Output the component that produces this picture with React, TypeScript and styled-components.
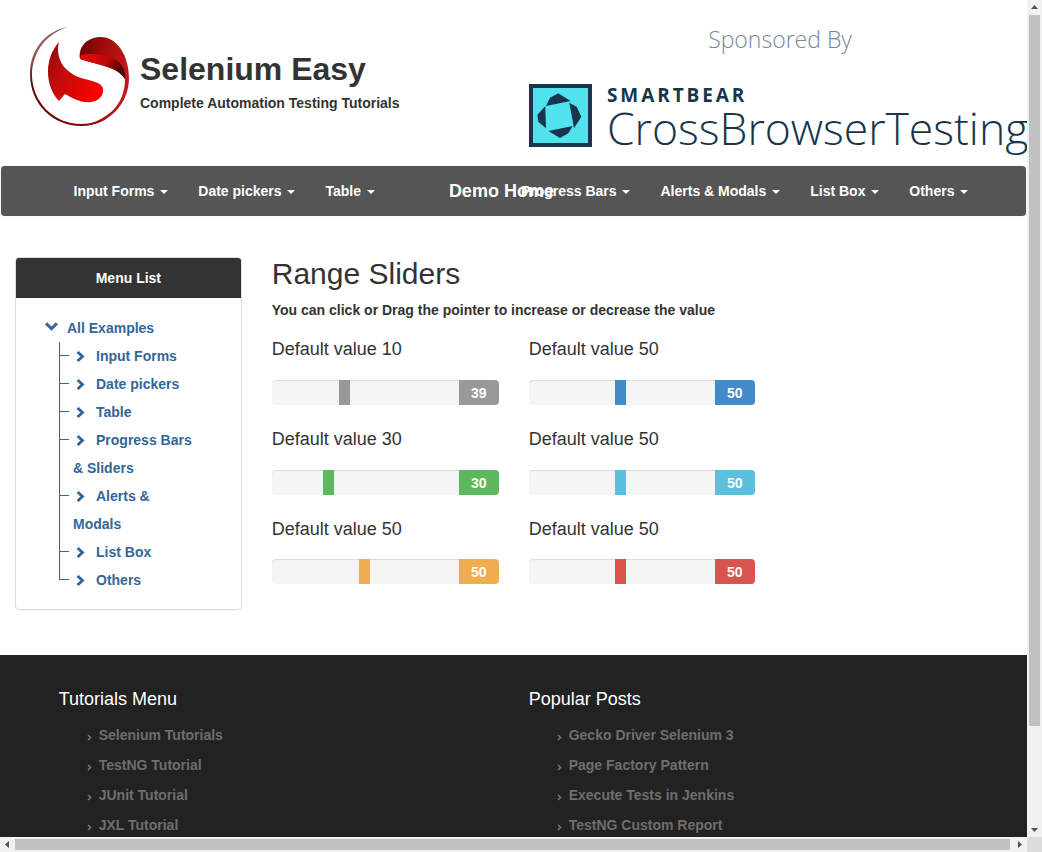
import { useState } from "react"
import styled, { createGlobalStyle } from "styled-components"

const GlobalStyle = createGlobalStyle`
  html, body {
    height: 100%;
    overflow: hidden;
  }
  body {
    margin: 0;
    background: #fff;
    color: #333;
    font-family: "Liberation Sans", Arial, sans-serif;
    font-size: 14px;
    line-height: 20px;
  }
`

const treeColor = "#336699"

const Logo = () => (
  <svg width="110" height="110" viewBox="0 0 110 110">
    <defs>
      <linearGradient id="ring" x1="0" y1="0" x2="1" y2="1">
        <stop offset="0" stopColor="#d8c0c0" />
        <stop offset="0.3" stopColor="#5a0606" />
        <stop offset="1" stopColor="#8a0a0a" />
      </linearGradient>
      <linearGradient id="upper" x1="0" y1="0" x2="1" y2="0.2">
        <stop offset="0" stopColor="#6d0404" />
        <stop offset="0.55" stopColor="#a80c0c" />
        <stop offset="1" stopColor="#c01818" />
      </linearGradient>
      <linearGradient id="fold" x1="0" y1="0" x2="1" y2="0.4">
        <stop offset="0" stopColor="#e80808" />
        <stop offset="0.6" stopColor="#c20808" />
        <stop offset="1" stopColor="#4a0202" />
      </linearGradient>
      <linearGradient id="lower" x1="0" y1="0" x2="1" y2="0.7">
        <stop offset="0" stopColor="#8c0808" />
        <stop offset="0.4" stopColor="#c00c0c" />
        <stop offset="1" stopColor="#fa0000" />
      </linearGradient>
    </defs>
    <path
      d="M43 5C20 9 5 28 5 52C5 82 28 104 56 104C66 104 76 101 84 95C75 99 66 102 56 102C29 102 7 80 7 53C7 30 22 11 43 5Z"
      fill="url(#ring)"
    />
    <path
      d="M55 37C53 25 62 15 76 15C92 15 104 34 104 56C104 82 84 103 56 104C80 99 100 85 100 57C92 44 72 43 55 37Z"
      fill="url(#upper)"
    />
    <path d="M55 37C72 43 92 44 100 57C101 51 98 44 93 39C82 32 66 31 56 33Z" fill="url(#fold)" />
    <path
      d="M34 20C27 28 23 38 23 50C23 61 27 72 34 79L40 72C50 78 58 81 66 80C74 79 79 73 78 67C77 61 70 60 64 58C52 56 42 50 37 42C33 35 32 27 34 20Z"
      fill="url(#lower)"
    />
  </svg>
)

const BearMark = () => (
  <BearSvg width="63" height="63" viewBox="0 0 63 63">
    <rect x="2" y="2" width="59" height="59" fill="#50e3ee" stroke="#17364d" strokeWidth="4" />
    <g fill="#17364d">
      <polygon points="17,22 21,13.7 29.3,9.3 41.7,17" />
      <polygon points="40.3,18.7 47.7,22.7 52.3,32.7 45,44.3" />
      <polygon points="43.7,42 39.3,49.3 31,54 19.3,47" />
      <polygon points="17,44.3 9.3,37.7 8.3,31 16.3,22" />
    </g>
  </BearSvg>
)

const Caret = styled.span`
  display: inline-block;
  width: 0;
  height: 0;
  margin-left: 2px;
  vertical-align: middle;
  border-top: 4px solid #fff;
  border-left: 4px solid transparent;
  border-right: 4px solid transparent;
`

const ChevronRight = () => (
  <TreeIcon width="9" height="11" viewBox="0 0 9 11">
    <polygon points="2.6,0 8.6,5.5 2.6,11 0.6,9 4.4,5.5 0.6,2" fill={treeColor} />
  </TreeIcon>
)

const ChevronDown = () => (
  <svg width="13" height="9" viewBox="0 0 13 9">
    <polygon points="0,2.4 2.2,0.2 6.5,4.4 10.8,0.2 13,2.4 6.5,8.8" fill={treeColor} />
  </svg>
)

const FooterBullet = () => (
  <BulletIcon width="5" height="7" viewBox="0 0 5 7">
    <polyline points="1,1 3.6,3.5 1,6" fill="none" stroke="#77776f" strokeWidth="1.5" />
  </BulletIcon>
)

const ScrollArrow = ({ points }: { points: string }) => (
  <ScrollButton>
    <svg width="15" height="15" viewBox="0 0 15 15">
      <polygon points={points} fill="#505050" />
    </svg>
  </ScrollButton>
)

type SliderColor = "grey" | "blue" | "green" | "cyan" | "orange" | "red"

const sliderColors: Record<SliderColor, string> = {
  grey: "#999999",
  blue: "#428bca",
  green: "#5cb85c",
  cyan: "#5bc0de",
  orange: "#f0ad4e",
  red: "#d9534f",
}

const sliders: { id: string; label: string; value: number; color: SliderColor }[] = [
  { id: "s1", label: "Default value 10", value: 39, color: "grey" },
  { id: "s2", label: "Default value 50", value: 50, color: "blue" },
  { id: "s3", label: "Default value 30", value: 30, color: "green" },
  { id: "s4", label: "Default value 50", value: 50, color: "cyan" },
  { id: "s5", label: "Default value 50", value: 50, color: "orange" },
  { id: "s6", label: "Default value 50", value: 50, color: "red" },
]

const RangeSlider = ({ label, start, color }: { label: string; start: number; color: SliderColor }) => {
  const [value, setValue] = useState(start)
  return (
    <SliderBlock>
      <SliderLabel>{label}</SliderLabel>
      <SliderRow>
        <RangeInput
          type="range"
          min={1}
          max={100}
          value={value}
          $color={sliderColors[color]}
          onChange={(e) => setValue(Number(e.target.value))}
        />
        <RangeOutput $color={sliderColors[color]}>{value}</RangeOutput>
      </SliderRow>
    </SliderBlock>
  )
}

const navLeft = ["Input Forms", "Date pickers", "Table"]
const navRight = ["Progress Bars", "Alerts & Modals", "List Box", "Others"]
const treeItems = ["Input Forms", "Date pickers", "Table", "Progress Bars & Sliders", "Alerts & Modals", "List Box", "Others"]

const footerColumns = [
  { title: "Tutorials Menu", links: ["Selenium Tutorials", "TestNG Tutorial", "JUnit Tutorial", "JXL Tutorial"] },
  { title: "Popular Posts", links: ["Gecko Driver Selenium 3", "Page Factory Pattern", "Execute Tests in Jenkins", "TestNG Custom Report"] },
]

const App = () => {
  return (
    <Frame>
      <GlobalStyle />
      <Viewport>
        <Header>
          <Brand>
            <LogoWrap>
              <Logo />
            </LogoWrap>
            <BrandText>
              <SiteTitle>Selenium Easy</SiteTitle>
              <SiteTagline>Complete Automation Testing Tutorials</SiteTagline>
            </BrandText>
          </Brand>
          <Sponsor>
            <SponsorTitle>Sponsored By</SponsorTitle>
            <SponsorLogo>
              <BearMark />
              <SponsorName>
                <BearWord>SMARTBEAR</BearWord>
                <ProductWord>CrossBrowserTesting</ProductWord>
              </SponsorName>
            </SponsorLogo>
          </Sponsor>
        </Header>

        <Navbar>
          <NavList>
            {navLeft.map((item) => (
              <NavItem key={item}>
                {item} <Caret />
              </NavItem>
            ))}
          </NavList>
          <DemoHome>Demo Home</DemoHome>
          <NavList>
            {navRight.map((item) => (
              <NavItem key={item}>
                {item} <Caret />
              </NavItem>
            ))}
          </NavList>
        </Navbar>

        <Content>
          <Sidebar>
            <Panel>
              <PanelHeading>Menu List</PanelHeading>
              <PanelBody>
                <TreeRoot>
                  <ChevronDown />
                  <TreeRootLabel>All Examples</TreeRootLabel>
                </TreeRoot>
                <TreeList>
                  {treeItems.map((item) => (
                    <TreeItem key={item}>
                      <ChevronRight />
                      {item}
                    </TreeItem>
                  ))}
                </TreeList>
              </PanelBody>
            </Panel>
          </Sidebar>
          <Main>
            <Title>Range Sliders</Title>
            <Intro>You can click or Drag the pointer to increase or decrease the value</Intro>
            <SliderGrid>
              {sliders.map((s) => (
                <RangeSlider key={s.id} label={s.label} start={s.value} color={s.color} />
              ))}
            </SliderGrid>
          </Main>
        </Content>

        <Footer>
          {footerColumns.map((col) => (
            <FooterColumn key={col.title}>
              <FooterTitle>{col.title}</FooterTitle>
              <FooterList>
                {col.links.map((link) => (
                  <FooterLink key={link}>
                    <FooterBullet />
                    {link}
                  </FooterLink>
                ))}
              </FooterList>
            </FooterColumn>
          ))}
        </Footer>
      </Viewport>

      <VerticalBar>
        <ScrollArrow points="7.5,5 11,9 4,9" />
        <VerticalTrack>
          <VerticalThumb />
        </VerticalTrack>
        <ScrollArrow points="4,6 11,6 7.5,10" />
      </VerticalBar>
      <HorizontalBar>
        <ScrollArrow points="5,7.5 9,4 9,11" />
        <HorizontalTrack>
          <HorizontalThumb />
        </HorizontalTrack>
        <ScrollArrow points="6,4 10,7.5 6,11" />
      </HorizontalBar>
      <ScrollCorner />
    </Frame>
  )
}

export default App

const Frame = styled.div`
  display: grid;
  grid-template-columns: 1fr 15px;
  grid-template-rows: 1fr 15px;
  height: 100vh;
`

const Viewport = styled.div`
  min-width: 0;
  min-height: 0;
  overflow: hidden;
`

const VerticalBar = styled.div`
  display: flex;
  flex-direction: column;
  background: #f1f1f1;
`

const HorizontalBar = styled.div`
  display: flex;
  background: #f1f1f1;
`

const ScrollButton = styled.div`
  flex: none;
  width: 15px;
  height: 15px;

  svg {
    display: block;
  }
`

const VerticalTrack = styled.div`
  flex: 1;
  padding: 0 2px;
`

const VerticalThumb = styled.div`
  height: 711px;
  background: #c1c1c1;
`

const HorizontalTrack = styled.div`
  flex: 1;
  padding: 2px 0;
`

const HorizontalThumb = styled.div`
  width: 995px;
  height: 11px;
  background: #c1c1c1;
`

const ScrollCorner = styled.div`
  background: #dcdcdc;
`

const Header = styled.header`
  display: flex;
  height: 166px;
`

const Brand = styled.div`
  display: flex;
  width: 529px;
  flex: none;
  padding-left: 25px;
  box-sizing: border-box;
`

const LogoWrap = styled.div`
  margin-top: 22px;
  height: 110px;
  margin-right: 5px;
`

const BrandText = styled.div`
  padding-top: 47px;
`

const SiteTitle = styled.h1`
  margin: 0;
  font-size: 32px;
  line-height: 44px;
  font-weight: bold;
  color: #333;
`

const SiteTagline = styled.div`
  margin-top: 2px;
  font-size: 14px;
  line-height: 20px;
  font-weight: bold;
`

const Sponsor = styled.div`
  width: 500px;
  flex: none;
`

const SponsorTitle = styled.div`
  padding-top: 23px;
  padding-left: 2px;
  text-align: center;
  font-family: "Open Sans", sans-serif;
  font-weight: 300;
  font-size: 23px;
  line-height: 33px;
  color: #76889a;
`

const SponsorLogo = styled.div`
  display: flex;
  gap: 15px;
  margin-top: 28px;
  color: #17364d;
`

const BearSvg = styled.svg`
  flex: none;
`

const SponsorName = styled.div`
  display: flex;
  flex-direction: column;
  white-space: nowrap;
`

const BearWord = styled.span`
  font-family: "Open Sans", sans-serif;
  font-weight: 700;
  font-size: 19px;
  line-height: 22px;
  letter-spacing: 2.9px;
`

const ProductWord = styled.span`
  font-family: "Open Sans", sans-serif;
  font-weight: 300;
  font-size: 44.5px;
  line-height: 44px;
`

const Navbar = styled.nav`
  display: flex;
  align-items: center;
  height: 50px;
  margin: 0 1px;
  padding-left: 57.5px;
  background: #555;
  border-radius: 4px;
  box-shadow: 0 0 1px #aaa;
  color: #fff;
`

const NavList = styled.ul`
  display: flex;
  list-style: none;
  margin: 0;
  padding: 0;
`

const NavItem = styled.li`
  padding: 15px;
  font-weight: bold;
  white-space: nowrap;
`

const DemoHome = styled.div`
  flex: 0 0 116px;
  min-width: 0;
  padding-left: 59px;
  box-sizing: border-box;
  font-size: 18px;
  font-weight: bold;
  white-space: nowrap;
`

const Content = styled.div`
  display: grid;
  grid-template-columns: 25% 75%;
  padding-top: 41px;
`

const Sidebar = styled.aside`
  padding: 0 15px;
`

const Panel = styled.div`
  border: 1px solid #ddd;
  border-radius: 4px;
  box-shadow: 0 1px 1px rgba(0, 0, 0, 0.05);
  overflow: hidden;
`

const PanelHeading = styled.div`
  height: 40px;
  background: #333;
  color: #fff;
  font-weight: bold;
  line-height: 40px;
  text-align: center;
`

const PanelBody = styled.div`
  padding: 16px 0 15px 29px;
  color: ${treeColor};
  font-weight: bold;
  line-height: 28px;
`

const TreeRoot = styled.div`
  display: flex;
  align-items: center;
  gap: 9px;
  height: 28px;

  svg {
    margin-top: -3px;
  }
`

const TreeRootLabel = styled.span``

const TreeList = styled.ul`
  list-style: none;
  margin: 0 0 0 14px;
  padding: 0;
  width: 138px;
`

const TreeItem = styled.li`
  position: relative;
  padding-left: 14px;

  &::before {
    content: "";
    position: absolute;
    left: 0;
    top: 0;
    width: 10px;
    height: 14px;
    border-left: 1px solid ${treeColor};
    border-bottom: 1px solid ${treeColor};
    box-sizing: border-box;
  }

  &:not(:last-child)::after {
    content: "";
    position: absolute;
    left: 0;
    top: 0;
    bottom: 0;
    border-left: 1px solid ${treeColor};
  }
`

const TreeIcon = styled.svg`
  margin: 0 11px 0 3px;
  vertical-align: -1px;
`

const Main = styled.main`
  padding: 0 15px;
`

const Title = styled.h2`
  margin: 0;
  font-size: 30px;
  font-weight: normal;
  line-height: 33px;
`

const Intro = styled.p`
  margin: 10px 0 0;
  font-weight: bold;
  line-height: 20px;
`

const SliderGrid = styled.div`
  display: grid;
  grid-template-columns: 227px 226px;
  column-gap: 30px;
  margin-top: 10px;
`

const SliderBlock = styled.div`
  height: 89.6px;
`

const SliderLabel = styled.div`
  font-size: 18px;
  line-height: 20px;
  margin-top: 9.4px;
`

const SliderRow = styled.div`
  display: flex;
  margin-top: 20.6px;
  height: 25px;
`

const RangeInput = styled.input<{ $color: string }>`
  flex: 1;
  min-width: 0;
  height: 25px;
  margin: 0;
  appearance: none;
  -webkit-appearance: none;
  background: #f5f5f5;
  border-radius: 4px 0 0 4px;
  box-shadow: inset 0 1px 1px rgba(0, 0, 0, 0.1);
  outline: none;

  &::-webkit-slider-thumb {
    -webkit-appearance: none;
    width: 11px;
    height: 25px;
    background: ${(p) => p.$color};
    border: none;
    border-radius: 0;
  }
`

const RangeOutput = styled.output<{ $color: string }>`
  width: 40px;
  flex: none;
  background: ${(p) => p.$color};
  border-radius: 0 4px 4px 0;
  color: #fff;
  font-weight: bold;
  line-height: 27px;
  text-align: center;
`

const Footer = styled.footer`
  display: grid;
  grid-template-columns: 470px 1fr;
  height: 295px;
  margin-top: 45px;
  padding: 34px 0 0 58.7px;
  box-sizing: border-box;
  background: #222;
`

const FooterColumn = styled.div``

const FooterTitle = styled.h4`
  margin: 0;
  color: #fff;
  font-size: 18px;
  font-weight: normal;
  line-height: 20px;
`

const FooterList = styled.ul`
  list-style: none;
  margin: 11px 0 0;
  padding: 0 0 0 28px;
`

const FooterLink = styled.li`
  height: 30px;
  line-height: 30px;
  font-weight: bold;
  color: #6e6e6e;
`

const BulletIcon = styled.svg`
  margin-right: 7px;
  vertical-align: -1px;
`
